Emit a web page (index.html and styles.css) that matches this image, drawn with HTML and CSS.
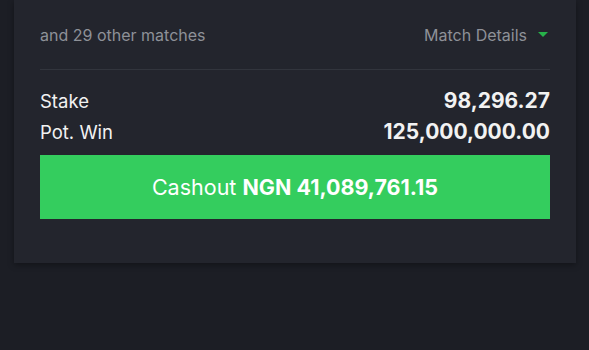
FILE: index.html
```html
<!DOCTYPE html>
<html>
<head>
<meta charset="utf-8">
<link rel="stylesheet" href="styles.css">
</head>
<body>
<div class="card">
  <div class="matches-row">
    <span class="others">and 29 other matches</span>
    <span class="details">Match Details <span class="caret"></span></span>
  </div>
  <div class="divider"></div>
  <div class="line">
    <span class="label">Stake</span>
    <span class="value">98,296.27</span>
  </div>
  <div class="line">
    <span class="label">Pot. Win</span>
    <span class="value">125,000,000.00</span>
  </div>
  <button class="cashout">Cashout <strong>NGN 41,089,761.15</strong></button>
</div>
</body>
</html>
```
FILE: styles.css
```css
html, body {
  margin: 0;
  padding: 0;
  background: #1c1e25;
  font-family: Inter, "Noto Sans", sans-serif;
}
body {
  width: 589px;
  height: 350px;
  overflow: hidden;
}
.card {
  margin: 0 13px 0 14px;
  height: 263px;
  box-sizing: border-box;
  padding: 0 26px;
  background: #23252d;
  box-shadow: 0 2px 6px rgba(0,0,0,0.35);
  display: flex;
  flex-direction: column;
}
.matches-row {
  display: flex;
  justify-content: space-between;
  align-items: center;
  height: 69px;
  font-size: 16px;
  color: #8e9198;
}
.details {
  display: flex;
  align-items: center;
  gap: 11px;
  padding-right: 2px;
}
.caret {
  width: 0;
  height: 0;
  border-left: 5px solid transparent;
  border-right: 5px solid transparent;
  border-top: 5px solid #27b24a;
}
.divider {
  height: 1px;
  background: #32353d;
  margin-bottom: 18px;
}
.line {
  display: flex;
  justify-content: space-between;
  align-items: baseline;
  height: 31px;
  color: #f2f2f2;
}
.label {
  font-size: 18.5px;
}
.value {
  font-size: 21px;
  font-weight: 700;
}
.cashout {
  margin-top: 5px;
  height: 64px;
  border: none;
  background: #34cd5e;
  color: #fff;
  font-family: inherit;
  font-size: 21.5px;
  font-weight: 400;
}
.cashout strong {
  font-weight: 700;
}
```
